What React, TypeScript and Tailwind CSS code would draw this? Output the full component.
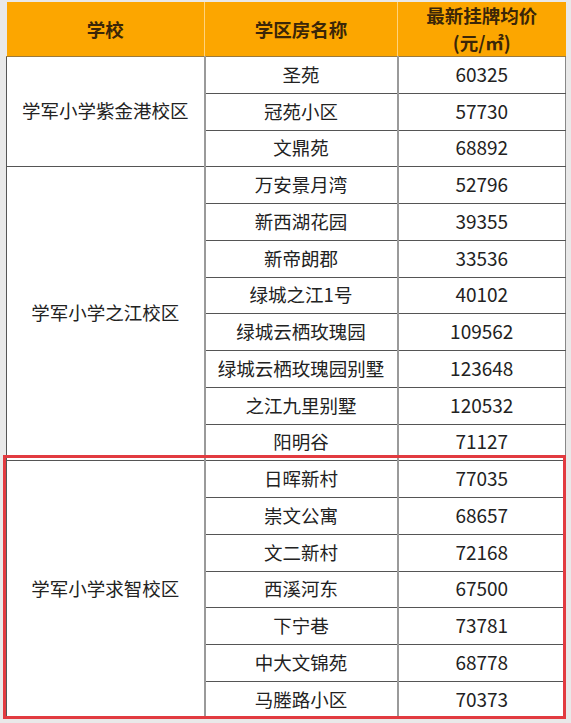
import React from "react";

const groups: { school: string; rows: [string, string][] }[] = [
  {
    school: "学军小学紫金港校区",
    rows: [
      ["圣苑", "60325"],
      ["冠苑小区", "57730"],
      ["文鼎苑", "68892"],
    ],
  },
  {
    school: "学军小学之江校区",
    rows: [
      ["万安景月湾", "52796"],
      ["新西湖花园", "39355"],
      ["新帝朗郡", "33536"],
      ["绿城之江1号", "40102"],
      ["绿城云栖玫瑰园", "109562"],
      ["绿城云栖玫瑰园别墅", "123648"],
      ["之江九里别墅", "120532"],
      ["阳明谷", "71127"],
    ],
  },
  {
    school: "学军小学求智校区",
    rows: [
      ["日晖新村", "77035"],
      ["崇文公寓", "68657"],
      ["文二新村", "72168"],
      ["西溪河东", "67500"],
      ["下宁巷", "73781"],
      ["中大文锦苑", "68778"],
      ["马塍路小区", "70373"],
    ],
  },
];

const font = { fontFamily: '"Noto Sans CJK SC", "Noto Sans", sans-serif' };

export default function App() {
  return (
    <div className="relative w-[571px] h-[723px] bg-[#e9e9e9] pl-[6px] pt-[2px] overflow-hidden" style={font}>
      <table className="w-[559px] border-collapse table-fixed text-[#222] text-[18.5px]">
        <colgroup>
          <col className="w-[198px]" />
          <col className="w-[193px]" />
          <col className="w-[168px]" />
        </colgroup>
        <thead>
          <tr className="h-[53px] bg-[#fca600] text-[#3b2608] font-bold">
            <th className="border-r border-r-[#ffd27a] border-b border-b-[#9c7a3c] text-center leading-[27px] p-0">学校</th>
            <th className="border-r border-r-[#ffd27a] border-b border-b-[#9c7a3c] text-center leading-[27px] p-0">学区房名称</th>
            <th className="border-b border-b-[#9c7a3c] text-center leading-[27px] p-0">
              最新挂牌均价
              <br />
              (元/㎡)
            </th>
          </tr>
        </thead>
        <tbody className="bg-white">
          {groups.map((g) =>
            g.rows.map((r, i) => (
              <tr key={g.school + r[0]} className="h-[36.76px]">
                {i === 0 && (
                  <td
                    rowSpan={g.rows.length}
                    className="border-l border-l-[#555] border-r-2 border-r-[#9a9a9a] border-b border-b-[#555] text-center align-middle p-0 pb-[2px]"
                  >
                    {g.school}
                  </td>
                )}
                <td className="border-r-2 border-r-[#9a9a9a] border-b border-b-[#555] text-center p-0 pb-[2px] leading-[32px]">
                  {r[0]}
                </td>
                <td className="border-r border-r-[#888] border-b border-b-[#555] text-center p-0 pb-[2px] leading-[32px] text-[19px]">
                  {r[1]}
                </td>
              </tr>
            ))
          )}
        </tbody>
      </table>
      <div className="absolute left-[3px] top-[455px] w-[563px] h-[264px] border-[3px] border-[#e23b40] pointer-events-none" />
    </div>
  );
}
